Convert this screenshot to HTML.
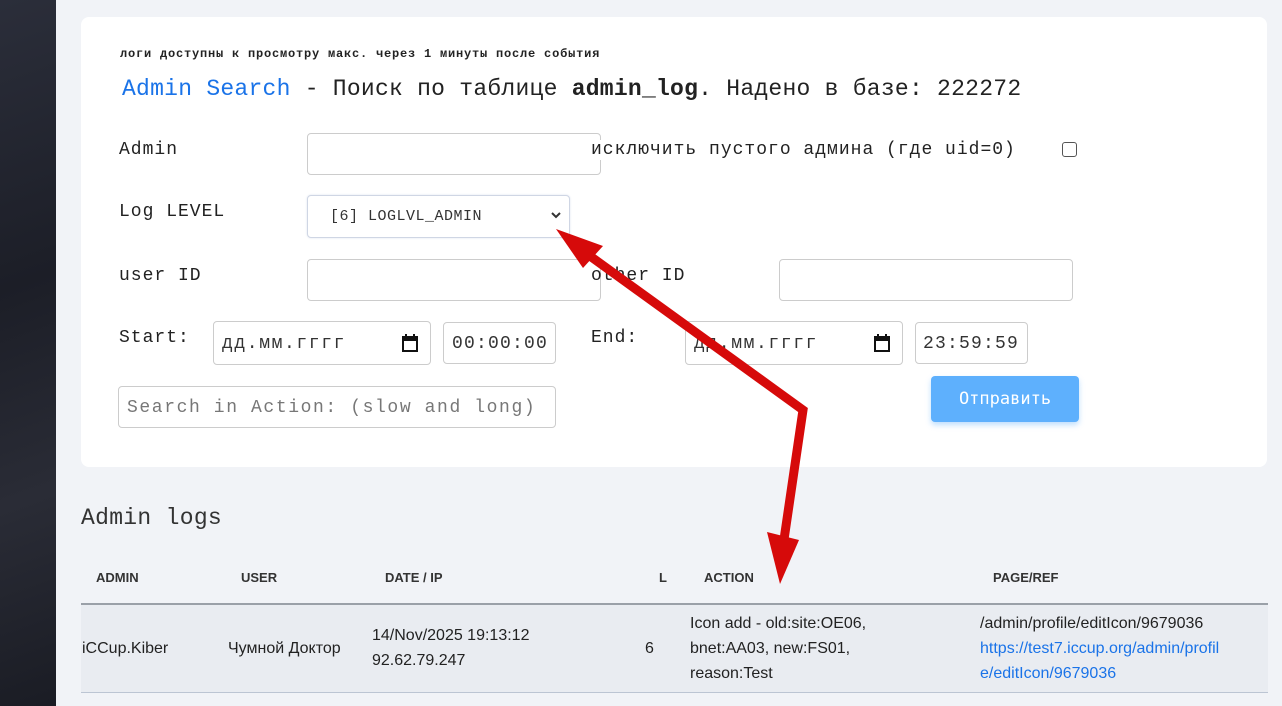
<!DOCTYPE html>
<html><head><meta charset="utf-8"><style>
*{margin:0;padding:0;box-sizing:border-box}
body{width:1282px;height:706px;overflow:hidden;background:#f1f3f7;position:relative;font-family:"Liberation Mono",monospace;color:#222}
.side{position:absolute;left:0;top:0;width:56px;height:706px;background:linear-gradient(160deg,#2b2e3a,#1c1e27 40%,#2a2c36 70%,#1a1c24)}
.card{position:absolute;left:81px;top:17px;width:1186px;height:450px;background:#fff;border-radius:8px}
.a{position:absolute;white-space:nowrap}
.lbl{font-size:18px;letter-spacing:1px;color:#222}
.in{position:absolute;border:1px solid #ccc;border-radius:4px;background:#fff}
.ph{font-size:18px;letter-spacing:1.6px;color:#333}
.th{position:absolute;top:570px;font:bold 13px "Liberation Sans",sans-serif;color:#333}
.td{position:absolute;font:16px/25px "Liberation Sans",sans-serif;color:#222}
</style></head><body>
<div class="side"></div>
<div class="card"></div>
<div class="a" style="left:120px;top:47px;font-size:12px;font-weight:bold;letter-spacing:0.8px">логи доступны к просмотру макс. через 1 минуты после события</div>
<div class="a" style="left:122px;top:76px;font-size:23px;letter-spacing:0.25px"><span style="color:#1a73e8">Admin Search</span> - Поиск по таблице <b>admin_log</b>. Надено в базе: 222272</div>
<div class="a lbl" style="left:119px;top:140px">Admin</div>
<div class="in" style="left:307px;top:133px;width:294px;height:42px"></div>
<div class="a lbl" style="left:591px;top:140px;background:#fff">исключить пустого админа (где uid=0)</div>
<div class="in" style="left:1062px;top:142px;width:15px;height:15px;border:1.5px solid #555;border-radius:3px"></div>
<div class="a lbl" style="left:119px;top:202px">Log LEVEL</div>
<div class="in" style="left:307px;top:195px;width:263px;height:43px;border-color:#cfd6e4;box-shadow:0 0 2px #dde3ee"></div>
<div class="a" style="left:330px;top:208px;font-size:15px;letter-spacing:0.5px;color:#333">[6] LOGLVL_ADMIN</div>
<svg class="a" style="left:550px;top:211px" width="12" height="10"><path d="M2 2l4 4 4-4" stroke="#333" stroke-width="2" fill="none"/></svg>
<div class="a lbl" style="left:119px;top:266px">user ID</div>
<div class="in" style="left:307px;top:259px;width:294px;height:42px"></div>
<div class="a lbl" style="left:591px;top:266px">other ID</div>
<div class="in" style="left:779px;top:259px;width:294px;height:42px"></div>
<div class="a lbl" style="left:119px;top:328px">Start:</div>
<div class="in" style="left:213px;top:321px;width:218px;height:44px"></div>
<div class="a ph" style="left:222px;top:334px">дд.мм.гггг</div>
<svg class="a" style="left:401px;top:333px" width="18" height="20"><rect x="2" y="4" width="14" height="14" fill="none" stroke="#111" stroke-width="2"/><rect x="2" y="4" width="14" height="4" fill="#111"/><path d="M5 1v4M13 1v4" stroke="#111" stroke-width="2"/></svg>
<div class="in" style="left:443px;top:322px;width:113px;height:42px"></div>
<div class="a ph" style="left:452px;top:334px;letter-spacing:1.2px">00:00:00</div>
<div class="a lbl" style="left:591px;top:328px">End:</div>
<div class="in" style="left:685px;top:321px;width:218px;height:44px"></div>
<div class="a ph" style="left:694px;top:334px">дд.мм.гггг</div>
<svg class="a" style="left:873px;top:333px" width="18" height="20"><rect x="2" y="4" width="14" height="14" fill="none" stroke="#111" stroke-width="2"/><rect x="2" y="4" width="14" height="4" fill="#111"/><path d="M5 1v4M13 1v4" stroke="#111" stroke-width="2"/></svg>
<div class="in" style="left:915px;top:322px;width:113px;height:42px"></div>
<div class="a ph" style="left:923px;top:334px;letter-spacing:1.2px">23:59:59</div>
<div class="in" style="left:118px;top:386px;width:438px;height:42px"></div>
<div class="a ph" style="left:127px;top:398px;color:#777;letter-spacing:1.6px">Search in Action: (slow and long)</div>
<div class="a" style="left:931px;top:376px;width:148px;height:46px;background:#5eb0fd;border-radius:4px;box-shadow:0 3px 6px rgba(94,176,253,.4);color:#fff;font:17px/46px 'DejaVu Sans Mono',monospace;text-align:center">Отправить</div>
<div class="a" style="left:81px;top:505px;font-size:23px;letter-spacing:0.3px;color:#333">Admin logs</div>
<div class="th" style="left:96px">ADMIN</div>
<div class="th" style="left:241px">USER</div>
<div class="th" style="left:385px">DATE / IP</div>
<div class="th" style="left:659px">L</div>
<div class="th" style="left:704px">ACTION</div>
<div class="th" style="left:993px">PAGE/REF</div>
<div class="a" style="left:81px;top:603px;width:1187px;height:90px;background:#e9ecf1;border-top:2px solid #9aa0a8;border-bottom:1px solid #bcc5d3"></div>
<div class="td" style="left:82px;top:636px">iCCup.Kiber</div>
<div class="td" style="left:228px;top:636px">Чумной Доктор</div>
<div class="td" style="left:372px;top:623px">14/Nov/2025 19:13:12<br>92.62.79.247</div>
<div class="td" style="left:645px;top:636px">6</div>
<div class="td" style="left:690px;top:611px">Icon add - old:site:OE06,<br>bnet:AA03, new:FS01,<br>reason:Test</div>
<div class="td" style="left:980px;top:611px">/admin/profile/editIcon/9679036<br><span style="color:#1a73e8">https://test7.iccup.org/admin/profil<br>e/editIcon/9679036</span></div>
<svg class="a" style="left:0;top:0" width="1282" height="706">
<path d="M572 243L803 410L781 560" stroke="#d60a0a" stroke-width="9" fill="none" stroke-linejoin="miter"/>
<path d="M556 229L603 246L583 268Z" fill="#d60a0a"/>
<path d="M780 584L767 532L799 540Z" fill="#d60a0a"/>
</svg>
</body></html>
